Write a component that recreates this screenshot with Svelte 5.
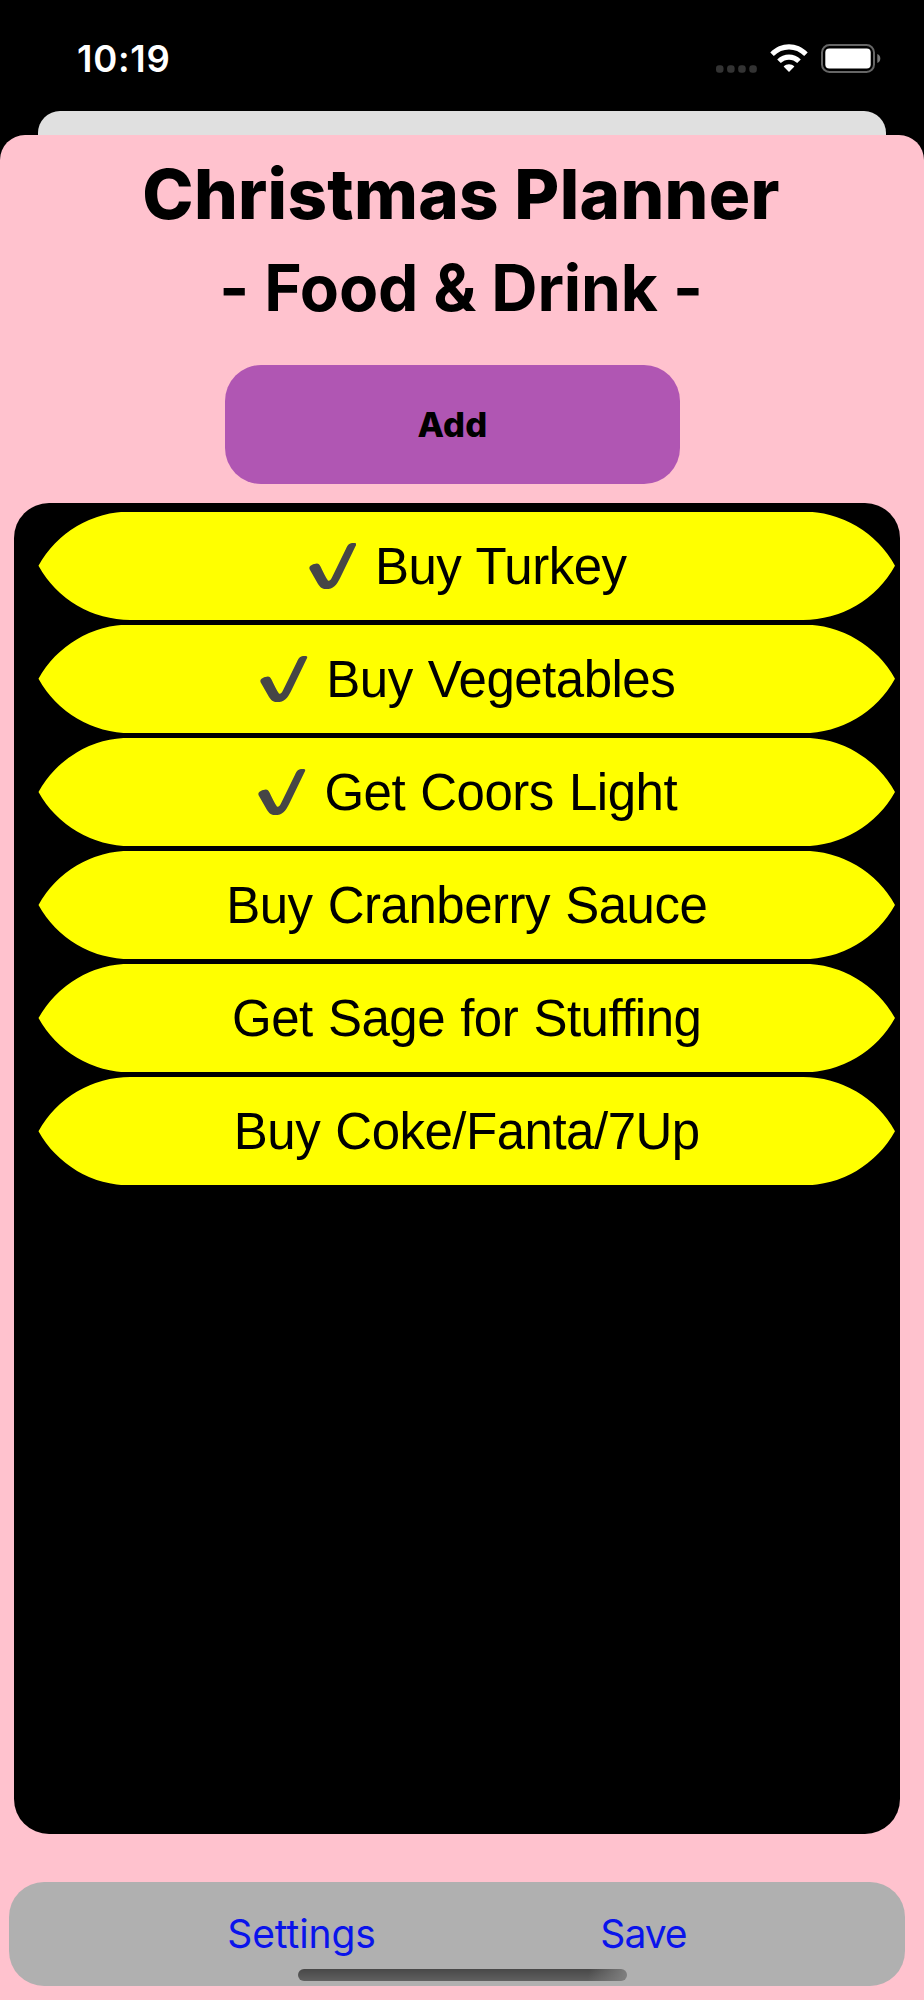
<script>
    let items = $state([
        { name: 'Buy Turkey', done: true },
        { name: 'Buy Vegetables', done: true },
        { name: 'Get Coors Light', done: true },
        { name: 'Buy Cranberry Sauce', done: false },
        { name: 'Get Sage for Stuffing', done: false },
        { name: 'Buy Coke/Fanta/7Up', done: false }
    ]);

    const toggle = (item) => item.done = !item.done;
</script>

<div class="screen">
    <header class="status-bar">
        <span class="time">10:19</span>
        <div class="status-icons">
            <svg class="dots" viewBox="0 0 41 8" aria-label="No signal">
                {#each [0, 1, 2, 3] as dot (dot)}
                    <rect x={dot * 11.1} y="0.2" width="7.5" height="7.5" rx="3" />
                {/each}
            </svg>
            <svg class="wifi" viewBox="0 0 38 28" aria-label="Wi-Fi">
                <path d="M0.3 8.4C10.6-2.6 27.4-2.6 37.7 8.4L34.2 12C25.8 3.4 12.2 3.4 3.8 12Z" />
                <path d="M7.2 15.4C13.7 8.7 24.3 8.7 30.8 15.4L27.2 19C22.7 14.5 15.3 14.5 10.8 19Z" />
                <path d="M13.6 22.4C16.6 19.4 21.4 19.4 24.4 22.4L19 28Z" />
            </svg>
            <svg class="battery" viewBox="0 0 60 29" aria-label="Battery">
                <rect x="1" y="1" width="52" height="27" rx="7.5" fill="none" stroke="#666" stroke-width="2" />
                <rect x="4.3" y="4.6" width="45.4" height="19.8" rx="4" fill="#fff" />
                <path d="M56.3 10C60.3 11.5 60.3 17.5 56.3 19Z" fill="#777" />
            </svg>
        </div>
    </header>

    <div class="back-sheet"></div>

    <main class="sheet">
        <h1>Christmas Planner</h1>
        <h2>- Food &amp; Drink -</h2>
        <button class="add">Add</button>

        <div class="list">
            {#each items as item (item.name)}
                <button class="item" class:done={item.done} onclick={() => toggle(item)}>
                    {#if item.done}
                        <svg class="check" viewBox="0 0 142 139" aria-label="Done">
                            <path d="M1 79C-3 69 12 63 23 62C28 62 31 66 34 71C42 88 49 103 57 114C64 114 67 107 70 101L111 17C117 5 121 0 134 0C142 0 144 2 140 9L94 104C82 128 73 139 51 139C38 139 33 134 26 123Z" />
                        </svg>
                    {/if}
                    <span>{item.name}</span>
                </button>
            {/each}
        </div>

        <nav class="toolbar">
            <button class="settings">Settings</button>
            <button class="save">Save</button>
            <div class="home-indicator"></div>
        </nav>
    </main>
</div>

<style>
    :global(body) {
        margin: 0;
        background: #000;
    }

    button {
        appearance: none;
        border: none;
        margin: 0;
        padding: 0;
        background: none;
        font-family: inherit;
    }

    .screen {
        display: flex;
        flex-direction: column;
        width: 924px;
        height: 2000px;
        overflow: hidden;
        background: #000;
        color: #000;
        font-family: Inter, sans-serif;
    }

    .status-bar {
        box-sizing: border-box;
        flex: none;
        display: flex;
        justify-content: space-between;
        height: 111px;
        padding: 43px 43px 0 77px;
    }

    .time {
        color: #fff;
        font-size: 36.5px;
        font-weight: 600;
        line-height: 32px;
        letter-spacing: 0.7px;
    }

    .status-icons {
        display: flex;
        align-items: flex-start;
    }

    .dots {
        width: 41px;
        height: 8px;
        margin: 21.5px 13px 0 0;
        fill: #333;
    }

    .wifi {
        width: 38px;
        height: 28px;
        margin: 0.5px 13px 0 0;
        fill: #fff;
    }

    .battery {
        width: 60px;
        height: 29px;
        margin-top: 1px;
    }

    .back-sheet {
        flex: none;
        height: 24px;
        margin: 0 38px;
        border-radius: 22px 22px 0 0;
        background: #e0e0e0;
    }

    .sheet {
        flex: 1;
        display: flex;
        flex-direction: column;
        padding-top: 14px;
        border-radius: 25px 25px 0 0;
        background: #ffc2ce;
    }

    h1, h2 {
        margin: 0 2px 0 0;
        text-align: center;
    }

    h1 {
        font-size: 69px;
        font-weight: 800;
        line-height: 91px;
        letter-spacing: 0.3px;
    }

    h2 {
        font-size: 64px;
        font-weight: 650;
        line-height: 95px;
        letter-spacing: -0.1px;
    }

    .add {
        flex: none;
        width: 455px;
        height: 118.5px;
        margin: 30px 0 19px 225px;
        border-radius: 36px;
        background: #b056b3;
        color: #000;
        font-size: 34.5px;
        font-weight: 800;
        letter-spacing: 0.2px;
    }

    .list {
        box-sizing: border-box;
        flex: none;
        display: flex;
        flex-direction: column;
        gap: 4.6px;
        width: 885.6px;
        height: 1331px;
        margin-left: 14.4px;
        padding: 9px 5px 0 24.1px;
        border-radius: 35px;
        background: #000;
    }

    .item {
        box-sizing: border-box;
        flex: none;
        display: flex;
        align-items: center;
        justify-content: center;
        gap: 18.5px;
        height: 108.5px;
        /* both ends are pairs of arcs that meet in a point */
        clip-path: path('M0 54.2A105 105 0 0 1 92 0H764.5A105 105 0 0 1 856.5 54.2A105 105 0 0 1 764.5 108.5H92A105 105 0 0 1 0 54.2Z');
        background: #ff0;
        color: #000;
        font-family: 'Liberation Sans', Helvetica, sans-serif;
        font-size: 51px;
        line-height: 60px;
        letter-spacing: -0.5px;
        word-spacing: 1.5px;
    }

    .item.done {
        padding-left: 2px;
    }

    .item span {
        padding-top: 2px;
    }

    .check {
        width: 47.5px;
        height: 46px;
        fill: #464646;
    }

    .toolbar {
        position: relative;
        flex: none;
        display: flex;
        align-items: center;
        width: 895.5px;
        height: 104px;
        margin: 48px 0 0 9.4px;
        border-radius: 35px;
        background: #b0b0b0;
    }

    .toolbar button {
        color: #0a14eb;
        font-size: 39px;
        line-height: 48px;
    }

    .toolbar .settings {
        width: 160px;
        margin-left: 212.1px;
        letter-spacing: -0.1px;
    }

    .toolbar .save {
        width: 100px;
        margin-left: 212px;
        letter-spacing: -1px;
    }

    /* floats over the toolbar's lower edge */
    .home-indicator {
        position: absolute;
        bottom: 4.5px;
        left: 288.6px;
        width: 329px;
        height: 12px;
        border-radius: 6px;
        background:
            linear-gradient(100deg, transparent 88%, #808080 100%),
            linear-gradient(#484848, #606060);
    }
</style>
